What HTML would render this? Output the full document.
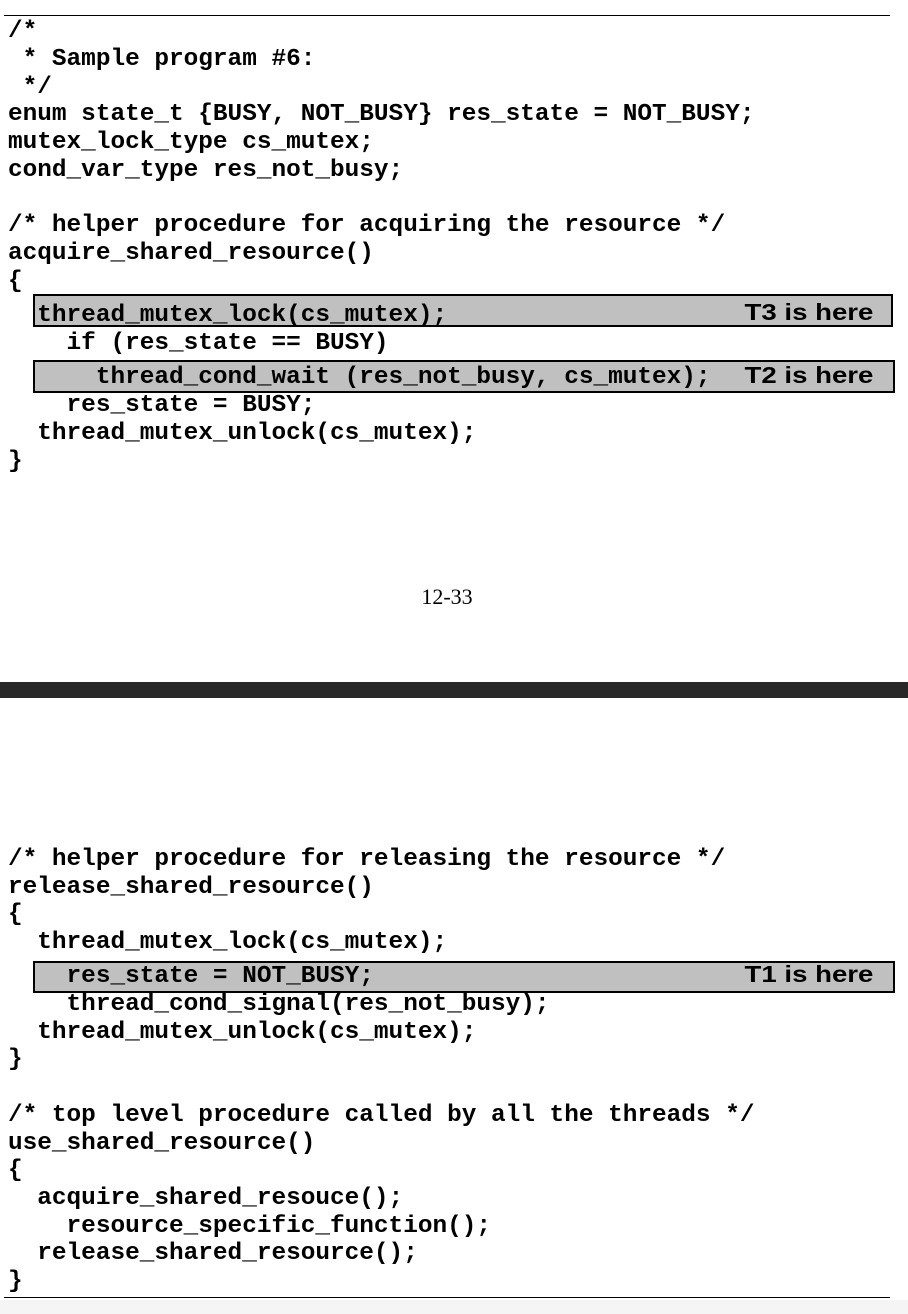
<!DOCTYPE html>
<html><head><meta charset="utf-8"><style>
html,body{margin:0;padding:0;background:#fff;}
body{width:908px;height:1314px;position:relative;overflow:hidden;}
.l{position:absolute;left:8px;height:28px;line-height:28px;font-family:"Liberation Mono",monospace;font-weight:bold;font-size:24.4px;white-space:pre;color:#000;margin-top:2px;}
.box{position:absolute;left:33px;background:#c0c0c0;border:2px solid #000;box-sizing:border-box;}
.lab{position:absolute;right:35px;height:28px;line-height:28px;font-family:"Liberation Sans",Arial,sans-serif;font-weight:bold;font-size:23px;transform:scaleX(1.2);transform-origin:right center;white-space:pre;}
</style></head><body>
<div style="position:absolute;left:4px;top:15px;width:886px;height:1px;background:#000"></div>

<div class="box" style="top:294px;width:860px;height:33px"></div>
<div class="box" style="top:360px;width:862px;height:33px"></div>
<div class="box" style="top:961px;width:862px;height:32px"></div>

<div class="l" style="top:16px">/*</div>
<div class="l" style="top:44px"> * Sample program #6:</div>
<div class="l" style="top:72px"> */</div>
<div class="l" style="top:99px">enum state_t {BUSY, NOT_BUSY} res_state = NOT_BUSY;</div>
<div class="l" style="top:127px">mutex_lock_type cs_mutex;</div>
<div class="l" style="top:155px">cond_var_type res_not_busy;</div>
<div class="l" style="top:210px">/* helper procedure for acquiring the resource */</div>
<div class="l" style="top:238px">acquire_shared_resource()</div>
<div class="l" style="top:266px">{</div>
<div class="l" style="top:300px">  thread_mutex_lock(cs_mutex);</div>
<div class="lab" style="top:298px">T3 is here</div>
<div class="l" style="top:328px">    if (res_state == BUSY)</div>
<div class="l" style="top:362px">      thread_cond_wait (res_not_busy, cs_mutex);</div>
<div class="lab" style="top:361px;right:35px">T2 is here</div>
<div class="l" style="top:390px">    res_state = BUSY;</div>
<div class="l" style="top:418px">  thread_mutex_unlock(cs_mutex);</div>
<div class="l" style="top:446px">}</div>

<div style="position:absolute;left:0;width:908px;top:584px;text-align:center;font-family:'Liberation Serif',serif;font-size:22px;line-height:26px"><span style="position:relative;left:-7px">12-33</span></div>

<div style="position:absolute;left:0;top:682px;width:908px;height:16px;background:#282828"></div>

<div class="l" style="top:844px">/* helper procedure for releasing the resource */</div>
<div class="l" style="top:872px">release_shared_resource()</div>
<div class="l" style="top:899px">{</div>
<div class="l" style="top:927px">  thread_mutex_lock(cs_mutex);</div>
<div class="l" style="top:961px">    res_state = NOT_BUSY;</div>
<div class="lab" style="top:960px;right:35px">T1 is here</div>
<div class="l" style="top:989px">    thread_cond_signal(res_not_busy);</div>
<div class="l" style="top:1017px">  thread_mutex_unlock(cs_mutex);</div>
<div class="l" style="top:1044px">}</div>
<div class="l" style="top:1100px">/* top level procedure called by all the threads */</div>
<div class="l" style="top:1128px">use_shared_resource()</div>
<div class="l" style="top:1155px">{</div>
<div class="l" style="top:1183px">  acquire_shared_resouce();</div>
<div class="l" style="top:1211px">    resource_specific_function();</div>
<div class="l" style="top:1238px">  release_shared_resource();</div>
<div class="l" style="top:1266px">}</div>

<div style="position:absolute;left:4px;top:1297px;width:886px;height:1px;background:#000"></div>
<div style="position:absolute;left:0;top:1300px;width:908px;height:14px;background:#f5f5f5"></div>
</body></html>
